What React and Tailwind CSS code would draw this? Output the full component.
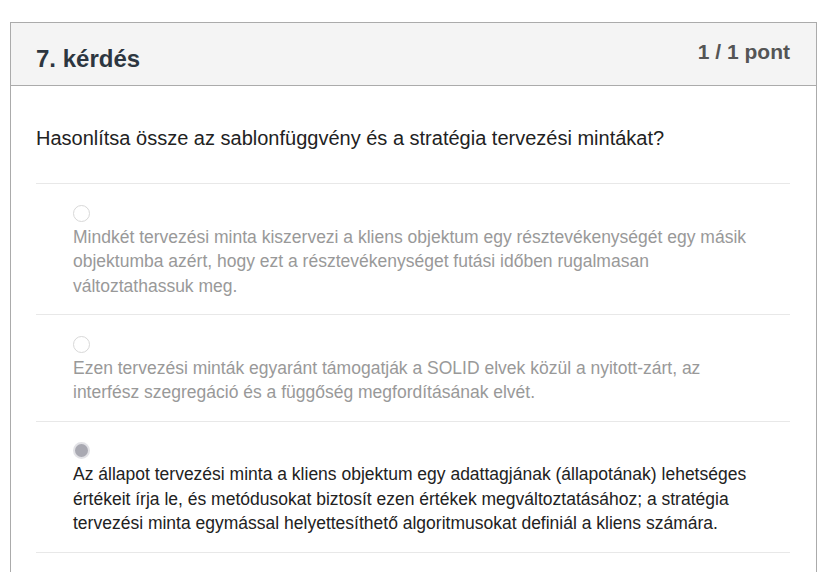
export default function App() {
  const options = [
    {
      text: "Mindkét tervezési minta kiszervezi a kliens objektum egy résztevékenységét egy másik objektumba azért, hogy ezt a résztevékenységet futási időben rugalmasan változtathassuk meg.",
      selected: false,
    },
    {
      text: "Ezen tervezési minták egyaránt támogatják a SOLID elvek közül a nyitott-zárt, az interfész szegregáció és a függőség megfordításának elvét.",
      selected: false,
    },
    {
      text: "Az állapot tervezési minta a kliens objektum egy adattagjának (állapotának) lehetséges értékeit írja le, és metódusokat biztosít ezen értékek megváltoztatásához; a stratégia tervezési minta egymással helyettesíthető algoritmusokat definiál a kliens számára.",
      selected: true,
    },
  ];
  return (
    <div className="w-[832px] h-[572px] overflow-hidden bg-white pt-[22px] pl-[10px]" style={{ fontFamily: '"Liberation Sans", Arial, sans-serif' }}>
      <div className="w-[807px] border border-[#ababab] bg-white h-[700px]">
        <div className="h-[63px] bg-[#f4f4f4] border-b border-[#ababab] flex justify-between pl-[25px] pr-[26px]">
          <h3 className="text-[24px] font-bold text-[#2d3640] pt-[21px] leading-[30px]">7. kérdés</h3>
          <div className="text-[21px] font-bold text-[#555] pt-[15px] leading-[28px]">1 / 1 pont</div>
        </div>
        <div className="pl-[25px] pr-[26px]">
          <p className="text-[20px] leading-[26px] text-[#222] pt-[39px] pb-[32px]">
            Hasonlítsa össze az sablonfüggvény és a stratégia tervezési mintákat?
          </p>
          <div className="border-t border-[#e8e8e8]">
            {options.map((o, i) => (
              <div key={i} className="border-b border-[#e8e8e8] pl-[37px] pr-[27px] pt-[20.5px] pb-[16px]">
                <div className="h-[20px] flex items-start">
                  {o.selected ? (
                    <div className="w-[17px] h-[17px] rounded-full border-2 border-[#e2e2e6] bg-[#a9a9b2]" />
                  ) : (
                    <div className="w-[17px] h-[17px] rounded-full border border-[#d8d8d8] bg-white" />
                  )}
                </div>
                <div className={"text-[17.5px] leading-[24.5px] " + (o.selected ? "text-[#222]" : "text-[#999]")}>
                  {o.text}
                </div>
              </div>
            ))}
          </div>
        </div>
      </div>
    </div>
  );
}
